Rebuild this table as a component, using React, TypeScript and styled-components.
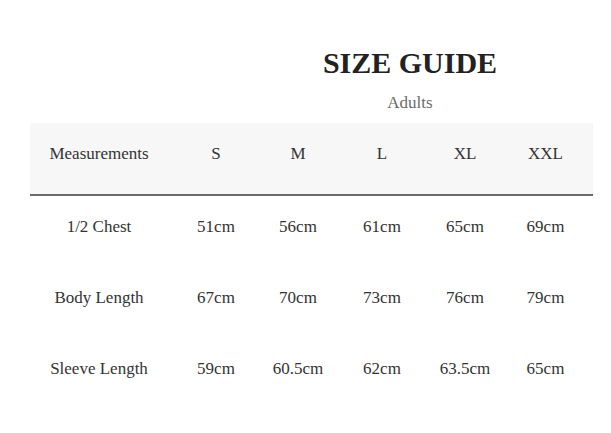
import styled, { createGlobalStyle } from "styled-components"

const GlobalStyle = createGlobalStyle`
    body {
        margin: 0;
        background: #ffffff;
        font-family: "Liberation Serif", "DejaVu Serif", serif;
        color: #333333;
    }
`

const Page = styled.div`
    width: 611px;
    height: 433px;
    overflow: hidden;
`

const Heading = styled.header`
    display: flex;
    flex-direction: column;
    align-items: center;
    padding: 45px 0 8px 209px;
`

const Title = styled.h1`
    margin: 0;
    font-size: 30px;
    line-height: 36px;
    font-weight: 700;
    color: #222222;
`

const Subtitle = styled.div`
    margin-top: 10px;
    font-size: 17px;
    line-height: 24px;
    color: #6b6b6b;
`

const Table = styled.div`
    margin-left: 30px;
    width: 563px;
`

const Row = styled.div<{ $head?: boolean }>`
    display: grid;
    grid-template-columns: 138px 96px 68px 100px 66px 95px;
    height: 71px;
    background: ${p => (p.$head ? "#f7f7f7" : "transparent")};
    border-bottom: ${p => (p.$head ? "2px solid #6a6a6a" : "none")};
    box-sizing: content-box;
`

const Cell = styled.div`
    padding-top: 19px;
    font-size: 17px;
    line-height: 24px;
    text-align: center;
    white-space: nowrap;
    color: #333333;
`

const sizes = ["S", "M", "L", "XL", "XXL"]

const rows = [
    { name: "1/2 Chest", values: ["51cm", "56cm", "61cm", "65cm", "69cm"] },
    { name: "Body Length", values: ["67cm", "70cm", "73cm", "76cm", "79cm"] },
    { name: "Sleeve Length", values: ["59cm", "60.5cm", "62cm", "63.5cm", "65cm"] },
]

export default function App() {
    return <Page>
        <GlobalStyle />
        <Heading>
            <Title>SIZE GUIDE</Title>
            <Subtitle>Adults</Subtitle>
        </Heading>
        <Table>
            <Row $head>
                <Cell>Measurements</Cell>
                {sizes.map(s => <Cell key={s}>{s}</Cell>)}
            </Row>
            {rows.map(r => (
                <Row key={r.name}>
                    <Cell>{r.name}</Cell>
                    {r.values.map((v, i) => <Cell key={i}>{v}</Cell>)}
                </Row>
            ))}
        </Table>
    </Page>
}
